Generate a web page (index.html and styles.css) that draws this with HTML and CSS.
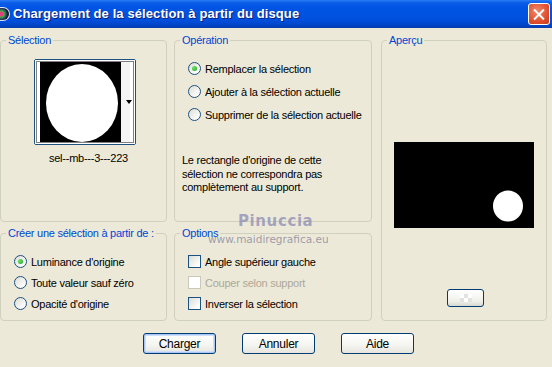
FILE: index.html
```html
<!DOCTYPE html>
<html>
    <head>
        <meta charset="UTF-8">
        <title>Chargement de la sélection à partir du disque</title>
        <link rel="stylesheet" href="styles.css">
    </head>
    <body>
        <div class="window">
            <div class="titlebar">
                <div class="appicon"></div>
                <div class="title">Chargement de la sélection à partir du disque</div>
                <div class="closebtn">
                    <svg width="21" height="21" viewBox="0 0 21 21">
                        <path d="M6 6 L15 15 M15 6 L6 15" stroke="#fff" stroke-width="2" stroke-linecap="square"/>
                    </svg>
                </div>
            </div>

            <div class="panels">
                <fieldset class="group g-selection">
                    <legend>Sélection</legend>
                    <div class="thumb">
                        <svg width="100" height="84" viewBox="0 0 100 84">
                            <rect x="0" y="0" width="100" height="84" fill="#fff"/>
                            <rect x="5" y="2" width="81" height="80" fill="#000"/>
                            <ellipse cx="47" cy="43" rx="36" ry="39" fill="#fff"/>
                            <rect x="86" y="2" width="9" height="80" fill="#f4f4f4"/>
                            <path d="M91 40 L97 40 L94 44 Z" fill="#000"/>
                            <rect x="1.5" y="1.5" width="97" height="81" fill="none" stroke="#000" stroke-width="1" stroke-dasharray="1 1"/>
                        </svg>
                    </div>
                    <div class="thumbname">sel--mb---3---223</div>
                </fieldset>

                <fieldset class="group g-operation">
                    <legend>Opération</legend>
                    <div class="choices">
                        <div class="choice"><span class="radio checked"></span>Remplacer la sélection</div>
                        <div class="choice"><span class="radio"></span>Ajouter à la sélection actuelle</div>
                        <div class="choice"><span class="radio"></span>Supprimer de la sélection actuelle</div>
                    </div>
                    <p class="note">Le rectangle d'origine de cette sélection ne correspondra pas complètement au support.</p>
                </fieldset>

                <fieldset class="group g-apercu">
                    <legend>Aperçu</legend>
                    <div class="preview">
                        <svg width="140" height="86" viewBox="0 0 140 86">
                            <rect width="140" height="86" fill="#000"/>
                            <ellipse cx="114" cy="64" rx="15" ry="15.5" fill="#fff"/>
                        </svg>
                    </div>
                    <div class="smallbtn"><span class="checker"></span></div>
                </fieldset>

                <fieldset class="group g-create">
                    <legend>Créer une sélection à partir de :</legend>
                    <div class="choices">
                        <div class="choice"><span class="radio checked"></span>Luminance d'origine</div>
                        <div class="choice"><span class="radio"></span>Toute valeur sauf zéro</div>
                        <div class="choice"><span class="radio"></span>Opacité d'origine</div>
                    </div>
                </fieldset>

                <fieldset class="group g-options">
                    <legend>Options</legend>
                    <div class="choices">
                        <div class="choice"><span class="check"></span>Angle supérieur gauche</div>
                        <div class="choice disabled"><span class="check"></span>Couper selon support</div>
                        <div class="choice"><span class="check"></span>Inverser la sélection</div>
                    </div>
                </fieldset>
            </div>

            <div class="buttons">
                <div class="btn default">Charger</div>
                <div class="btn">Annuler</div>
                <div class="btn">Aide</div>
            </div>

            <div class="watermark">
                <div class="wm-name">Pinuccia</div>
                <div class="wm-url">www.maidiregrafica.eu</div>
            </div>
        </div>
    </body>
</html>
```

FILE: styles.css
```css
*{
    box-sizing: border-box;
}
body{
    margin: 0;
    font-family: "Liberation Sans", Arial, sans-serif;
    font-size: 11px;
    letter-spacing: -0.25px;
    color: #000;
}
.window{
    position: relative;
    width: 552px;
    height: 367px;
    background-color: #ece9d8;
    overflow: hidden;
}

/* title bar */
.titlebar{
    display: flex;
    align-items: center;
    height: 28px;
    background: linear-gradient(#2a7cf4 0px, #0a5ce8 3px, #0054e3 8px, #0050dd 20px, #0046c8 25px, #003dae 28px);
    border-bottom: 1px solid #0b3fae;
}
.appicon{
    width: 12px;
    height: 14px;
    margin-left: -2px;
    border-radius: 0 7px 7px 0;
    background: radial-gradient(circle at 30% 50%, #e04080 0 2px, #40b040 3px, #202060 6px, #101018 7px);
    border: 1px solid #d8e4f8;
    border-left: none;
}
.title{
    flex: 1;
    margin-left: 3px;
    color: #fff;
    font-weight: bold;
    font-size: 13px;
    text-shadow: 1px 1px 0 #0a1e7a;
    letter-spacing: 0.1px;
}
.closebtn{
    width: 22px;
    height: 22px;
    margin-right: 2px;
    margin-top: 1px;
    border: 1px solid #fff;
    border-radius: 3px;
    background: radial-gradient(circle at 40% 35%, #f08a6c, #e0502e 60%, #c23a18);
    display: flex;
    align-items: center;
    justify-content: center;
}

/* group boxes */
.panels{
    display: grid;
    grid-template-columns: 167px 198px 168px;
    grid-template-rows: 188px 94px;
    column-gap: 7px;
    row-gap: 5px;
    padding-top: 6px;
}
.group{
    margin: 0;
    padding: 0;
    min-width: 0;
    border: 1px solid #d0d0bf;
    border-radius: 4px;
    position: relative;
}
.group legend{
    color: #0046d5;
    padding: 0 2px;
    margin-left: 5px;
    line-height: 13px;
}
.g-selection{
    grid-column: 1;
    grid-row: 1;
}
.g-operation{
    grid-column: 2;
    grid-row: 1;
}
.g-apercu{
    grid-column: 3;
    grid-row: 1 / span 2;
    margin-left: 2px;
}
.g-create{
    grid-column: 1;
    grid-row: 2;
}
.g-options{
    grid-column: 2;
    grid-row: 2;
}

.thumb{
    width: 102px;
    height: 86px;
    margin: 12px 0 0 33px;
    border: 1px solid #1c5180;
    border-radius: 2px;
}
.thumb svg{
    display: block;
}
.thumbname{
    margin-top: 7px;
    margin-left: 48px;
    font-size: 11px;
}

.choices{
    display: flex;
    flex-direction: column;
    gap: 10px;
    padding: 15px 0 0 13px;
}
.g-create .choices,
.g-options .choices{
    padding-top: 15px;
    gap: 8px;
}
.choice{
    display: flex;
    align-items: center;
    gap: 4px;
    height: 13px;
}
.choice.disabled{
    color: #aca899;
}
.radio{
    width: 13px;
    height: 13px;
    border-radius: 50%;
    border: 1px solid #1c5180;
    background: linear-gradient(135deg, #dcdcd6, #fff 85%);
    display: flex;
    align-items: center;
    justify-content: center;
}
.radio.checked::after{
    content: "";
    width: 5px;
    height: 5px;
    border-radius: 50%;
    background: radial-gradient(circle at 35% 35%, #6ee26e, #21a121);
}
.check{
    width: 13px;
    height: 13px;
    border: 1px solid #1c5180;
    background: linear-gradient(135deg, #dcdcd6, #fff 85%);
}
.disabled .check{
    border-color: #cac8bb;
    background: #fff;
}

.note{
    margin: 33px 0 0 7px;
    line-height: 13.5px;
    width: 180px;
}

.g-apercu{
    display: flex;
    flex-direction: column;
    align-items: center;
}
.preview{
    margin-top: 95px;
    width: 140px;
    height: 86px;
}
.preview svg{
    display: block;
}
.smallbtn{
    margin-top: 61px;
    margin-left: 3px;
    width: 37px;
    height: 18px;
    border: 1px solid #003c74;
    border-radius: 3px;
    background: linear-gradient(#fff, #f0f0ea 70%, #d8d8d0);
    display: flex;
    align-items: center;
    justify-content: center;
}
.checker{
    width: 12px;
    height: 8px;
    background:
        linear-gradient(45deg, #e2e2e2 25%, transparent 25%, transparent 75%, #e2e2e2 75%),
        linear-gradient(45deg, #e2e2e2 25%, #fff 25%, #fff 75%, #e2e2e2 75%);
    background-size: 8px 8px;
    background-position: 0 0, 4px 4px;
}

/* dialog buttons */
.buttons{
    display: flex;
    gap: 26px;
    padding: 0 0 0 143px;
    margin-top: 12px;
}
.btn{
    width: 73px;
    height: 21px;
    border: 1px solid #003c74;
    border-radius: 3px;
    background: linear-gradient(#fff, #f4f4f0 60%, #e6e5dd);
    display: flex;
    align-items: center;
    justify-content: center;
    font-size: 12px;
}
.btn.default{
    box-shadow: inset 0 0 0 1px #aac6f5, inset 0 0 0 2px #cfdffb;
}

/* watermark over the dialog */
.watermark{
    position: absolute;
    left: 207px;
    top: 211px;
    width: 125px;
    pointer-events: none;
    letter-spacing: 0;
}
.wm-name{
    font-family: "DejaVu Sans", sans-serif;
    font-weight: bold;
    font-size: 15px;
    letter-spacing: 0.6px;
    margin-left: 31px;
    color: rgba(140, 140, 180, 0.75);
    line-height: 20px;
}
.wm-url{
    font-family: "DejaVu Sans", sans-serif;
    font-size: 10.5px;
    margin-left: 1px;
    color: rgba(120, 120, 150, 0.7);
    line-height: 12px;
    margin-top: 2px;
}
```
